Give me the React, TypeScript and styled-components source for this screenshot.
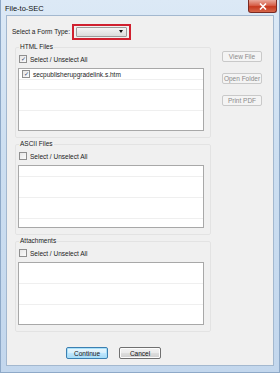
import styled, { createGlobalStyle } from 'styled-components'

const Global = createGlobalStyle`
  html, body {
    margin: 0;
    padding: 0;
    background: #ffffff;
  }
  body {
    font-family: "Liberation Sans", Arial, sans-serif;
  }
`

const Window = styled.div`
  width: 280px;
  height: 373px;
  box-sizing: border-box;
  display: flex;
  flex-direction: column;
  padding: 0 5px 6px 5px;
  background: linear-gradient(to bottom, #dce9f6 0%, #cddff1 40%, #c3d7ed 100%);
  border: 1px solid #8ea9c8;
  border-top: none;
`

const TitleBar = styled.div`
  height: 15px;
  display: flex;
  align-items: center;
  justify-content: space-between;
  margin: 0 -4px 0 -4px;
  padding-left: 3px;
`

const Title = styled.span`
  font-family: "Liberation Sans", Arial, sans-serif;
  font-size: 7.5px;
  color: #111;
  margin-top: 1px;
`

const CloseButton = styled.div`
  width: 27px;
  height: 12px;
  align-self: flex-start;
  margin-right: 1px;
  border: 1px solid #7a2a22;
  border-top: none;
  border-radius: 0 0 3px 3px;
  background: linear-gradient(to bottom, #e9a99c 0%, #d7604a 45%, #c7391f 55%, #d5664a 100%);
  display: flex;
  align-items: center;
  justify-content: center;
`

const Client = styled.div`
  flex: 1;
  display: flex;
  flex-direction: column;
  background: #f0f0f0;
  border: 1px solid #a3b8cf;
  padding: 8px 0 0 5px;
`

const FormTypeRow = styled.div`
  height: 15px;
  display: flex;
  align-items: center;
  gap: 2px;
`

const Label = styled.span`
  font-size: 6.5px;
  color: #1a1a1a;
  white-space: nowrap;
`

const Highlight = styled.div`
  width: 51px;
  height: 12px;
  border: 2px solid #d0202f;
  display: flex;
  align-items: center;
  padding: 0 2px;
`

const Combo = styled.div`
  flex: 1;
  height: 8px;
  border: 1px solid #9c9c9c;
  border-radius: 1px;
  background: linear-gradient(to bottom, #f4f4f4, #dcdcdc);
  display: flex;
  align-items: center;
  justify-content: flex-end;
  padding-right: 3px;
`

const Arrow = styled.div`
  width: 0;
  height: 0;
  border-left: 2.5px solid transparent;
  border-right: 2.5px solid transparent;
  border-top: 3px solid #111;
`

const Body = styled.div`
  display: flex;
  margin-top: 4px;
`

const Groups = styled.div`
  width: 196px;
  margin-left: 3px;
  display: flex;
  flex-direction: column;
  gap: 2px;
`

const Group = styled.fieldset`
  margin: 0;
  padding: 3px 6px 6px 2px;
  border: 1px solid #e3e3e3;
  border-radius: 2px;
  min-width: 0;
`

const Legend = styled.legend`
  font-size: 6.5px;
  line-height: 8px;
  color: #1a1a1a;
  padding: 0 1px;
  margin-left: 1px;
`

const CheckRow = styled.div`
  height: 10px;
  display: flex;
  align-items: center;
  gap: 3px;
  padding-left: 1px;
  font-size: 6.5px;
  color: #1a1a1a;
`

const Box = styled.span<{ checked?: boolean }>`
  width: 6px;
  height: 6px;
  border: 1px solid #8f8f8f;
  background: linear-gradient(to bottom right, #e6e6e6, #fbfbfb);
  display: flex;
  align-items: center;
  justify-content: center;
  font-size: 6px;
  line-height: 6px;
  color: #2a3f6e;
`

const List = styled.div`
  margin-top: 4px;
  height: 61px;
  border: 1px solid #a8a8a8;
  background-color: #ffffff;
  background-image: repeating-linear-gradient(
    to bottom,
    transparent 0px,
    transparent 10px,
    #efefef 10px,
    #efefef 10.5px
  );
`

const ListRow = styled(CheckRow)`
  padding-left: 3px;
`

const SideButtons = styled.div`
  display: flex;
  flex-direction: column;
  gap: 11px;
  padding-top: 8px;
  margin-left: 11px;
`

const SideButton = styled.div`
  width: 40px;
  height: 11px;
  box-sizing: border-box;
  border: 1px solid #c9c9c9;
  border-radius: 2px;
  background: #f4f4f4;
  color: #8a8a8a;
  font-size: 6.5px;
  display: flex;
  align-items: center;
  justify-content: center;
`

const Footer = styled.div`
  margin-top: auto;
  display: flex;
  gap: 11px;
  padding: 0 0 6px 54px;
`

const DialogButton = styled.div<{ primary?: boolean }>`
  width: 42px;
  height: 12px;
  box-sizing: border-box;
  border: 1px solid ${p => (p.primary ? '#3c7fb1' : '#707070')};
  border-radius: 2px;
  background: ${p =>
    p.primary
      ? 'linear-gradient(to bottom, #eaf6fd 0%, #d9f0fc 45%, #bee6fd 55%, #a7d9f5 100%)'
      : 'linear-gradient(to bottom, #f2f2f2 0%, #ebebeb 45%, #dddddd 55%, #cfcfcf 100%)'};
  box-shadow: ${p => (p.primary ? 'inset 0 0 0 1px #a8e0f9' : 'inset 0 0 0 1px #fcfcfc')};
  color: #111;
  font-size: 6.5px;
  display: flex;
  align-items: center;
  justify-content: center;
`

const CloseX = () => (
  <svg width="8" height="7" viewBox="0 0 8 7">
    <path d="M1 0.5 L7 6.5 M7 0.5 L1 6.5" stroke="#ffffff" strokeWidth="1.6" />
  </svg>
)

const FileGroup = ({ title, files, allChecked }: { title: string; files: string[]; allChecked?: boolean }) => (
  <Group>
    <Legend>{title}</Legend>
    <CheckRow>
      <Box checked={allChecked}>{allChecked ? '✓' : ''}</Box>
      Select / Unselect All
    </CheckRow>
    <List>
      {files.map(f => (
        <ListRow key={f}>
          <Box checked>✓</Box>
          {f}
        </ListRow>
      ))}
    </List>
  </Group>
)

export default function App() {
  return (
    <>
      <Global />
      <Window>
        <TitleBar>
          <Title>File-to-SEC</Title>
          <CloseButton>
            <CloseX />
          </CloseButton>
        </TitleBar>
        <Client>
          <FormTypeRow>
            <Label>Select a Form Type:</Label>
            <Highlight>
              <Combo>
                <Arrow />
              </Combo>
            </Highlight>
          </FormTypeRow>
          <Body>
            <Groups>
              <FileGroup title="HTML Files" files={['secpublisherupgradelink.s.htm']} allChecked />
              <FileGroup title="ASCII Files" files={[]} />
              <FileGroup title="Attachments" files={[]} />
            </Groups>
            <SideButtons>
              <SideButton>View File</SideButton>
              <SideButton>Open Folder</SideButton>
              <SideButton>Print PDF</SideButton>
            </SideButtons>
          </Body>
          <Footer>
            <DialogButton primary>Continue</DialogButton>
            <DialogButton>Cancel</DialogButton>
          </Footer>
        </Client>
      </Window>
    </>
  )
}
